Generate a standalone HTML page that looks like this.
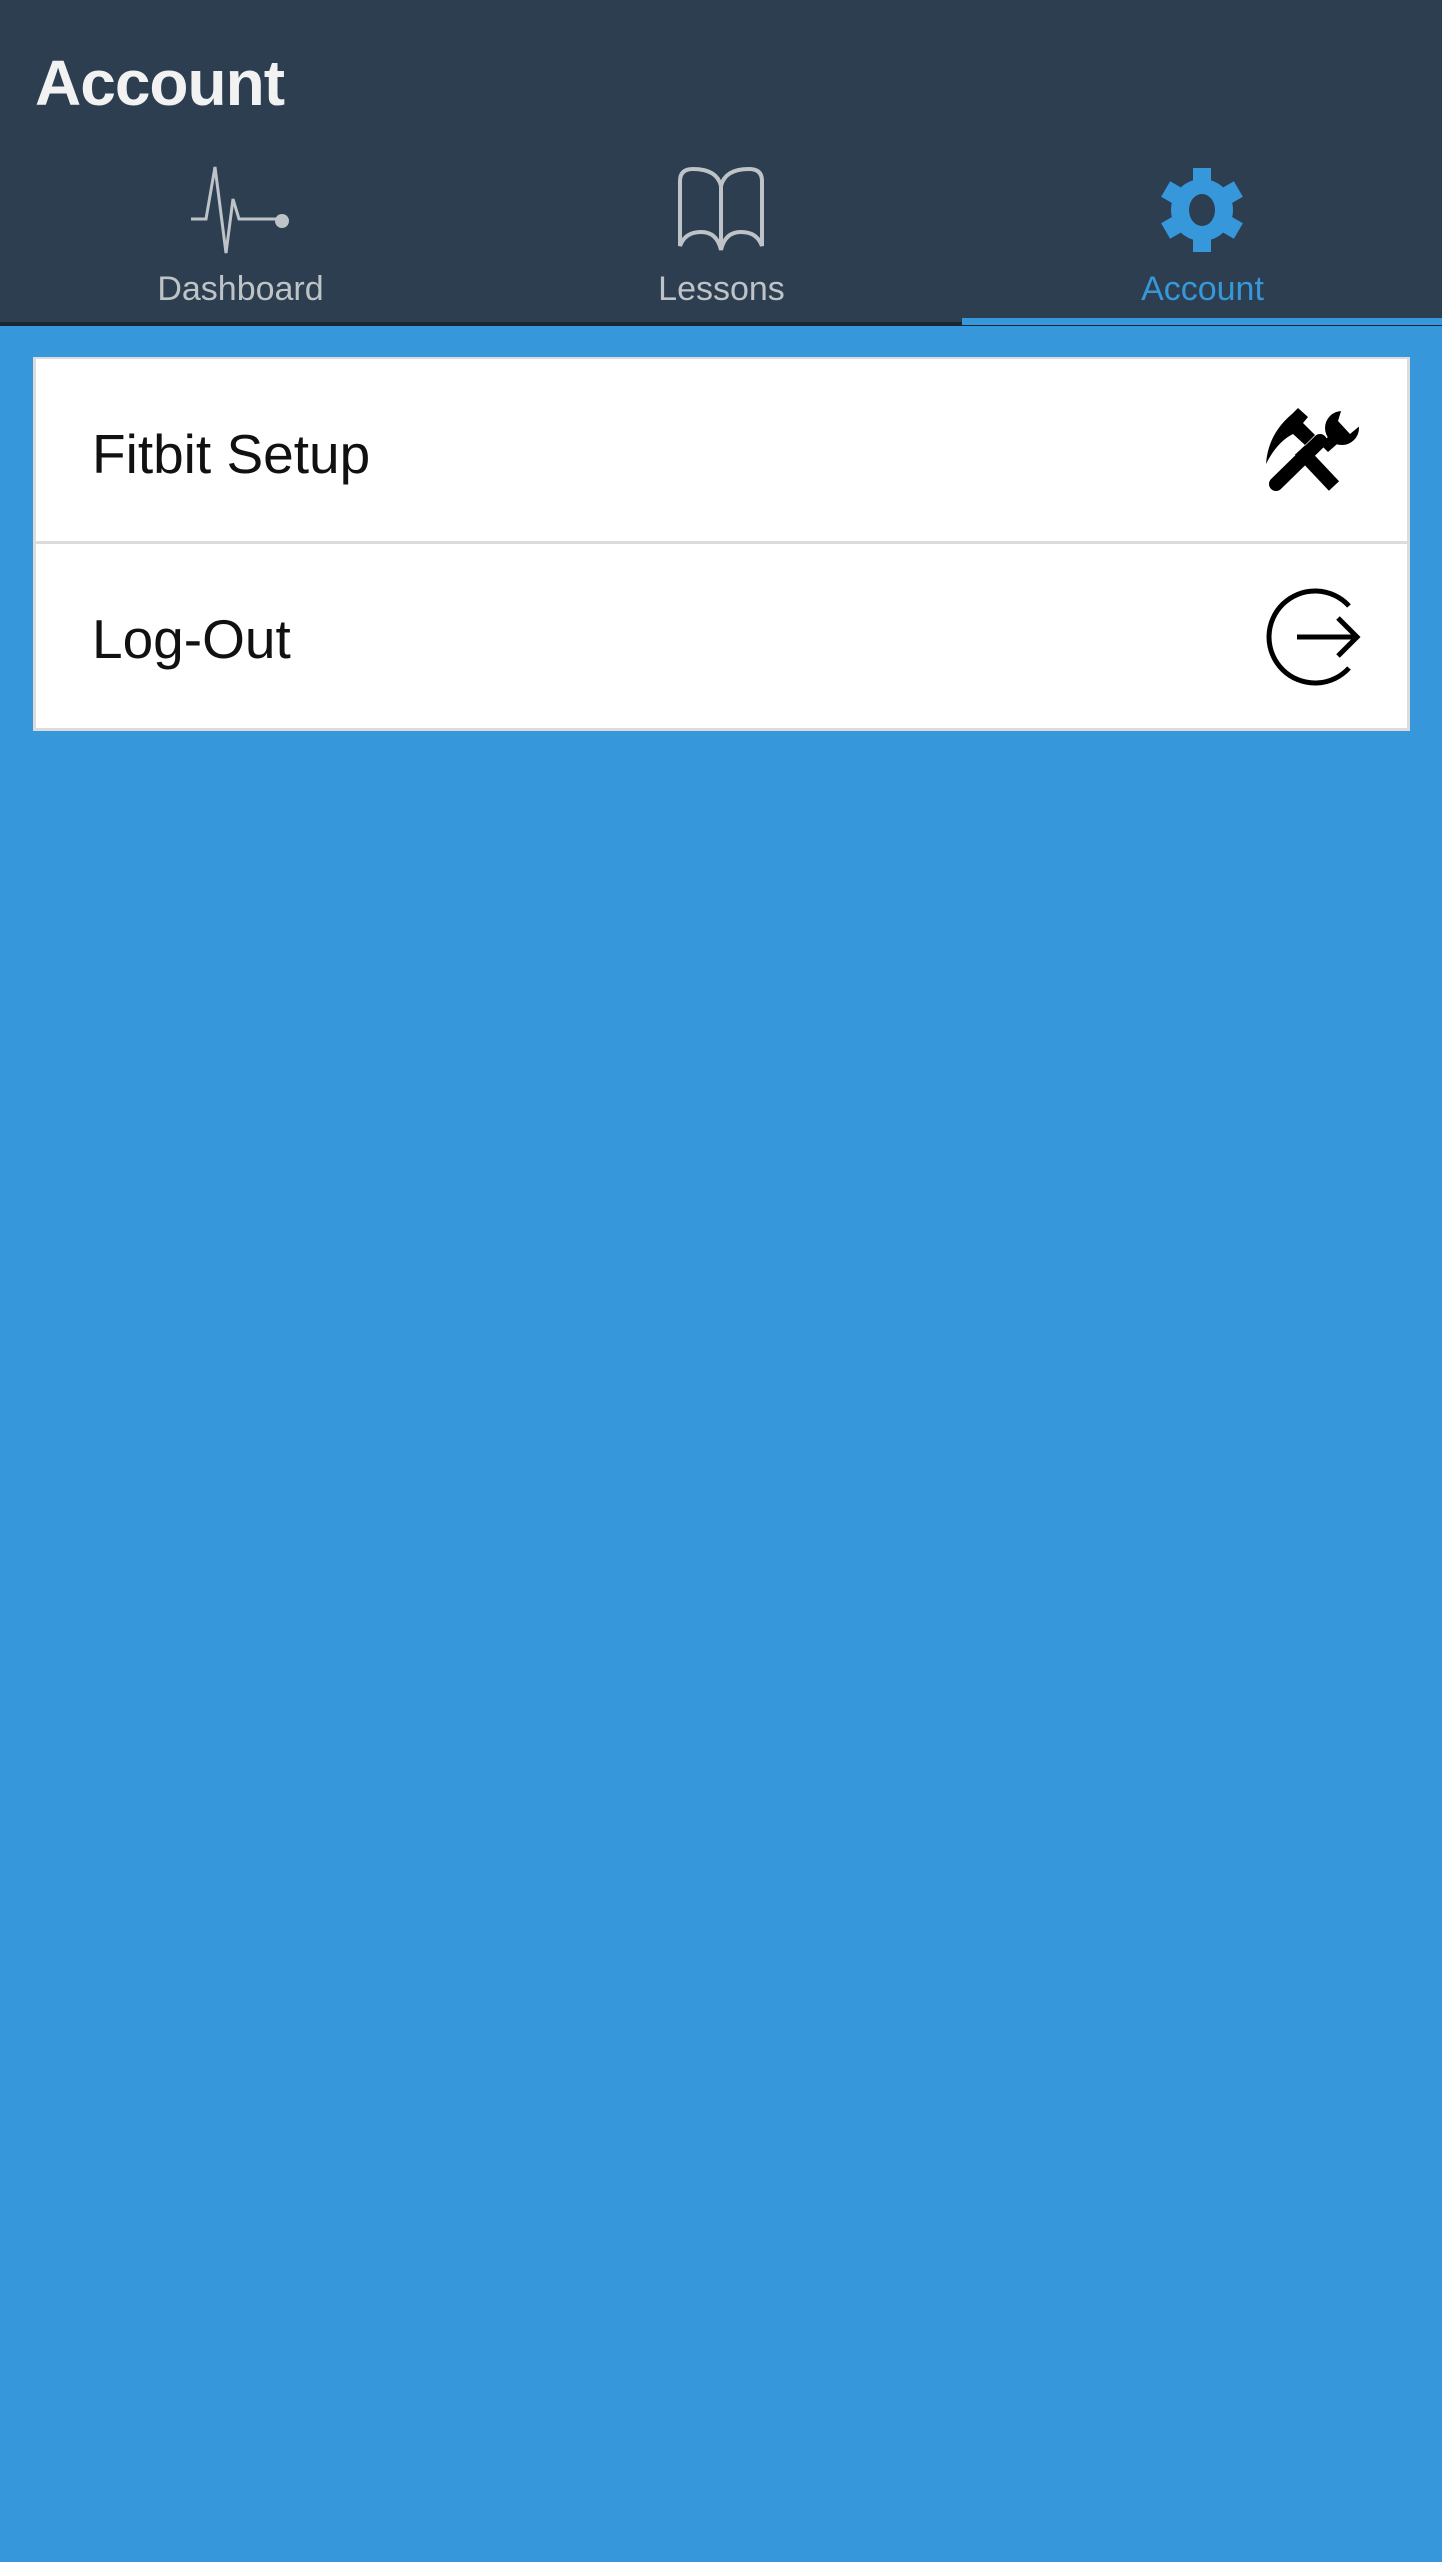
<!DOCTYPE html>
<html><head><meta charset="utf-8"><style>
html,body{margin:0;padding:0}
body{width:1442px;height:2562px;background:#3797db;position:relative;overflow:hidden;font-family:"Liberation Sans",sans-serif}
.hdr{position:absolute;left:0;top:0;width:1442px;height:322px;background:#2d3e50}
.line{position:absolute;left:0;top:322px;width:1442px;height:4px;background:#1c2631}
.act{position:absolute;left:962px;top:318px;width:480px;height:7px;background:#3797db}
.title{position:absolute;left:35px;top:46px;font-size:64px;font-weight:bold;color:#f2f2f2;letter-spacing:-1px}
.lbl{position:absolute;top:270px;font-size:34px;color:#bdc3c7;width:481px;text-align:center}
svg{position:absolute}
.card{position:absolute;left:33px;top:357px;width:1371px;height:369px;background:#fff;border:3px solid #dcdcdc;border-top-width:2px}
.div{position:absolute;left:33px;top:541px;width:1377px;height:3px;background:#dcdcdc}
.row{position:absolute;left:92px;font-size:55px;color:#111}
</style></head><body>
<div class="hdr"></div>
<div class="title">Account</div>
<svg style="left:188px;top:164px" width="104" height="92" viewBox="0 0 104 92"><path d="M3 55 H18 L27 3 L38 89 L45 35 L51 55 H62" fill="none" stroke="#bdc3c7" stroke-width="3"/><circle cx="94" cy="57" r="7" fill="#bdc3c7"/><path d="M62 55 H90" stroke="#bdc3c7" stroke-width="3"/></svg>
<svg style="left:677px;top:166px" width="88" height="88" viewBox="0 0 88 88"><path d="M3 80 V15 Q3 3 16 3 Q40 3 44 20 Q48 3 72 3 Q85 3 85 15 V80 Q80 66 64 66 Q48 66 44 84 Q40 66 24 66 Q8 66 3 80 Z M44 20 V84" fill="none" stroke="#bdc3c7" stroke-width="4"/></svg>
<svg style="left:1158px;top:166px" width="88" height="88" viewBox="-44 -44 88 88"><g fill="#3797db"><circle r="31"/><g id="t"><rect x="-9" y="-42" width="18" height="16"/></g><use href="#t" transform="rotate(60)"/><use href="#t" transform="rotate(120)"/><use href="#t" transform="rotate(180)"/><use href="#t" transform="rotate(240)"/><use href="#t" transform="rotate(300)"/></g><ellipse rx="13" ry="16" fill="#2d3e50"/></svg>
<div class="lbl" style="left:0">Dashboard</div>
<div class="lbl" style="left:481px">Lessons</div>
<div class="lbl" style="left:962px;color:#3797db">Account</div>
<div class="line"></div>
<div class="act"></div>
<div class="card"></div>
<div class="div"></div>
<div class="row" style="top:422px">Fitbit Setup</div>
<div class="row" style="top:607px">Log-Out</div>
<svg style="left:1262px;top:408px" width="100" height="86" viewBox="0 0 100 86">
<g stroke="#000" stroke-width="14" fill="none"><line x1="72" y1="78" x2="38" y2="42"/><line x1="14" y1="76" x2="58" y2="33" stroke-linecap="round"/></g>
<path d="M4 56 Q6 26 30 6 L36 0 L46 9 L41 15 L53 27 L43 37 L31 26 Q15 34 4 56 Z" fill="#000"/>
<circle cx="80" cy="20" r="17" fill="#000"/>
<polygon points="80,0 100,0 100,16 88,26 76,13" fill="#fff"/>
<polygon points="58,36 74,22 82,30 66,44" fill="#000"/>
</svg>
<svg style="left:1262px;top:586px" width="102" height="102" viewBox="0 0 102 102"><path d="M87 20 A46 46 0 1 0 87 82" fill="none" stroke="#000" stroke-width="5"/><path d="M35 51 H95 M76 32 L95 51 L76 70" fill="none" stroke="#000" stroke-width="5"/></svg>
</body></html>
